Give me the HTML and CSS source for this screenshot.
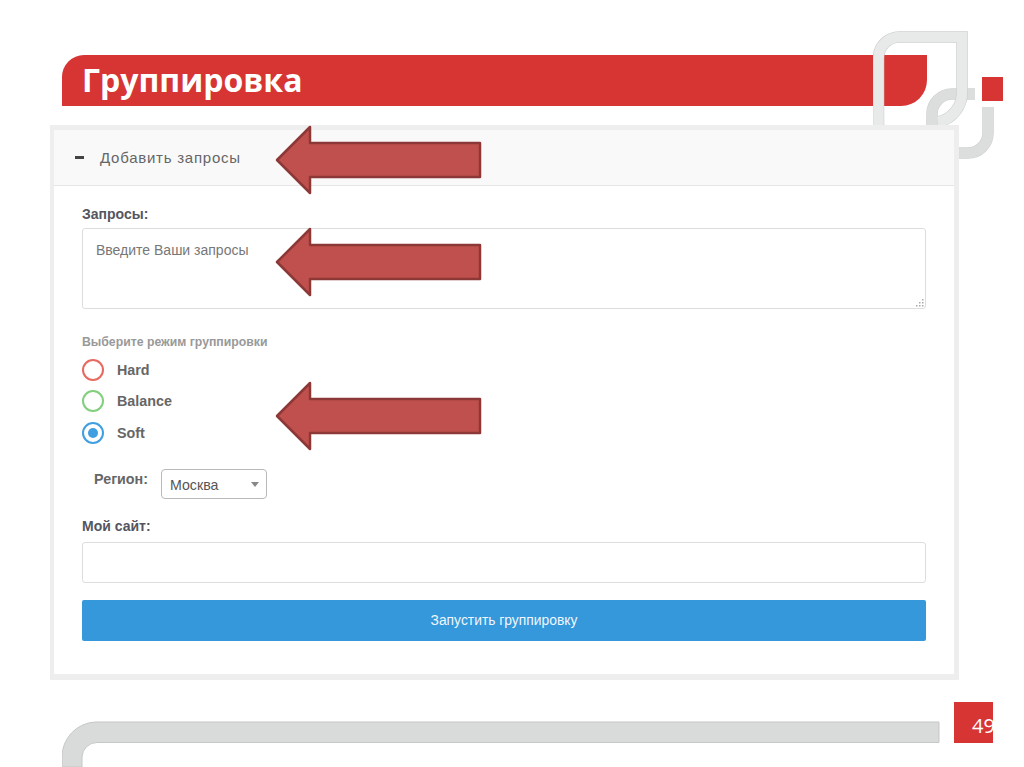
FILE: index.html
```html
<!DOCTYPE html>
<html lang="ru">
<head>
    <meta charset="UTF-8">
    <title>Группировка</title>
    <link rel="stylesheet" href="styles.css">
</head>
<body>
    <div class="slide">
        <h1 class="title-bar">Группировка</h1>

        <!-- logo, sits between the title bar and the panel -->
        <svg class="logo" width="150" height="150" viewBox="873 20 150 150">
            <g fill="none" stroke="#cfd0d0" stroke-width="11.500">
                <path d="M975 94H952a20 20 0 0 0-20 20V130"/>
                <path d="M988 107V133a20 20 0 0 1-20 20H950"/>
            </g>
            <g fill="none" stroke="#dcdddd" stroke-width="10.500">
                <path d="M975 94H952a20 20 0 0 0-20 20V130"/>
                <path d="M988 107V133a20 20 0 0 1-20 20H950"/>
            </g>
            <g fill="none" stroke="#c9caca" stroke-width="11.500">
                <path d="M878.500 125V58a21 21 0 0 1 21-21H962V92a30 30 0 0 1-24 30"/>
            </g>
            <g fill="none" stroke="#e8e9e9" stroke-width="10.500">
                <path d="M878.500 125V58a21 21 0 0 1 21-21H962V92a30 30 0 0 1-24 30"/>
            </g>
            <rect x="982" y="77" width="21" height="24" fill="#d73434"/>
        </svg>

        <div class="panel">
            <div class="panel-header">
                <span class="minus"></span>
                <span>Добавить запросы</span>
            </div>
            <div class="panel-body">
                <label class="label">Запросы:</label>
                <div class="queries-wrap">
                    <textarea class="queries" placeholder="Введите Ваши запросы"></textarea>
                    <svg class="grip" width="9" height="9" viewBox="0 0 9 9">
                        <g fill="#aaa">
                            <rect x="7" y="1" width="1.500" height="1.500"/>
                            <rect x="4" y="4" width="1.500" height="1.500"/>
                            <rect x="7" y="4" width="1.500" height="1.500"/>
                            <rect x="1" y="7" width="1.500" height="1.500"/>
                            <rect x="4" y="7" width="1.500" height="1.500"/>
                            <rect x="7" y="7" width="1.500" height="1.500"/>
                        </g>
                    </svg>
                </div>

                <div class="mode-title">Выберите режим группировки</div>
                <div class="radio-row"><span class="radio radio-hard"></span><span class="radio-text">Hard</span></div>
                <div class="radio-row"><span class="radio radio-balance"></span><span class="radio-text">Balance</span></div>
                <div class="radio-row"><span class="radio radio-soft"><span class="radio-dot"></span></span><span class="radio-text">Soft</span></div>

                <div class="region-row">
                    <span class="region-label">Регион:</span>
                    <div class="select"><span>Москва</span><span class="caret"></span></div>
                </div>

                <label class="label site-label">Мой сайт:</label>
                <input class="site-input" type="text">
                <button class="run-button">Запустить группировку</button>
            </div>
        </div>

        <svg class="arrow arrow-1" width="208" height="70" viewBox="0 0 208 70">
            <path class="arrow-shape" d="M2 35L35 2V18H205V52H35V68Z"/>
        </svg>
        <svg class="arrow arrow-2" width="208" height="70" viewBox="0 0 208 70">
            <path class="arrow-shape" d="M2 35L35 2V18H205V52H35V68Z"/>
        </svg>
        <svg class="arrow arrow-3" width="208" height="70" viewBox="0 0 208 70">
            <path class="arrow-shape" d="M2 35L35 2V18H205V52H35V68Z"/>
        </svg>

        <svg class="footer-line" width="880" height="46" viewBox="0 0 880 46">
            <path d="M0 46V36A35 35 0 0 1 33 1H877V21.500H35A15 15 0 0 0 20 36V46Z" fill="#d9dada" stroke="#c6c7c7"/>
        </svg>
        <div class="page-number"><span>49</span></div>
    </div>
</body>
</html>
```
FILE: styles.css
```css
* {
    box-sizing: border-box;
}
body {
    margin: 0;
    background: #fff;
    font-family: "Liberation Sans", Arial, sans-serif;
}
.slide {
    position: relative;
    width: 1024px;
    height: 767px;
    overflow: hidden;
    padding-top: 55px;
}
.title-bar {
    margin: 0 97px 0 62px;
    height: 51px;
    padding-left: 20px;
    background: #d73434;
    border-radius: 22px 0 26px 0;
    color: #fff;
    font-family: "Open Sans", sans-serif;
    font-size: 32px;
    font-weight: 700;
    line-height: 50px;
}
.logo {
    position: absolute;
    left: 873px;
    top: 20px;
    z-index: 1;
}
.panel {
    position: relative;
    z-index: 2;
    width: 909px;
    height: 555px;
    margin: 19px 0 0 50px;
    background: #fff;
    border: 4px solid #eeeeee;
    border-top-width: 5px;
    border-right-width: 5px;
    border-bottom-width: 6px;
}
.panel-header {
    display: flex;
    align-items: center;
    height: 56px;
    padding-left: 21px;
    background: #f9f9f9;
    border-bottom: 1px solid #e6e6e6;
    color: #666;
    font-size: 15px;
    letter-spacing: 0.75px;
}
.minus {
    width: 9px;
    height: 3px;
    margin-right: 16px;
    background: #444;
}
.panel-body {
    padding: 21px 28px 0 28px;
}
.label {
    display: block;
    height: 21px;
    color: #555560;
    font-size: 14px;
    font-weight: 700;
    line-height: 15px;
}
.queries-wrap {
    position: relative;
    height: 81px;
}
.queries {
    display: block;
    width: 844px;
    height: 81px;
    padding: 13px 13px;
    background: #fff;
    border: 1px solid #dddddd;
    border-radius: 3px;
    font-family: "Liberation Sans", Arial, sans-serif;
    font-size: 14px;
    resize: none;
}
.queries::placeholder {
    color: #777;
    opacity: 1;
}
.grip {
    position: absolute;
    right: 2px;
    bottom: 2px;
}
.mode-title {
    margin-top: 26px;
    height: 19px;
    color: #999;
    font-size: 12.250px;
    font-weight: 700;
    line-height: 14px;
}
.radio-row {
    display: flex;
    align-items: center;
    height: 31.500px;
}
.radio {
    display: flex;
    align-items: center;
    justify-content: center;
    width: 22px;
    height: 22px;
    margin-right: 13px;
    border: 2px solid #999;
    border-radius: 50%;
}
.radio-hard {
    border-color: #e8695f;
}
.radio-balance {
    border-color: #82cf7e;
}
.radio-soft {
    border-color: #3f9fe0;
}
.radio-dot {
    width: 10px;
    height: 10px;
    background: #3f9fe0;
    border-radius: 50%;
}
.radio-text {
    color: #666;
    font-size: 14.300px;
    font-weight: 700;
}
.region-row {
    display: flex;
    align-items: flex-start;
    margin-top: 20px;
    padding-left: 12px;
}
.region-label {
    width: 67px;
    margin-top: 2px;
    color: #666;
    font-size: 14.300px;
    font-weight: 700;
}
.select {
    display: flex;
    align-items: center;
    justify-content: space-between;
    width: 106px;
    height: 30px;
    padding: 2px 7px 0 8px;
    border: 1px solid #b9b9b9;
    border-radius: 4px;
    color: #555;
    font-size: 14.200px;
}
.caret {
    width: 0;
    height: 0;
    border-left: 4px solid transparent;
    border-right: 4px solid transparent;
    border-top: 5px solid #888;
}
.site-label {
    margin-top: 20px;
    height: 23px;
}
.site-input {
    display: block;
    width: 844px;
    height: 41px;
    background: #fff;
    border: 1px solid #dddddd;
    border-radius: 3px;
}
.run-button {
    display: block;
    width: 844px;
    height: 41px;
    margin-top: 17px;
    background: #3498db;
    border: none;
    border-radius: 2px;
    color: #f0f6fb;
    font-family: "Liberation Sans", Arial, sans-serif;
    font-size: 13.850px;
}
.arrow {
    position: absolute;
    left: 275px;
    z-index: 3;
}
.arrow-1 {
    top: 125px;
}
.arrow-2 {
    top: 227px;
}
.arrow-3 {
    top: 381px;
}
.arrow-shape {
    fill: #c0504d;
    stroke: #8c3836;
    stroke-width: 2.500;
    stroke-linejoin: round;
}
.footer-line {
    position: absolute;
    left: 62px;
    top: 721px;
}
.page-number {
    position: absolute;
    left: 954px;
    top: 702px;
    width: 39px;
    height: 41px;
    overflow: hidden;
    padding: 11px 0 0 18px;
    background: #d73434;
    color: #fff;
    font-family: "Open Sans", sans-serif;
    font-size: 20px;
    line-height: 26px;
    white-space: nowrap;
}
```
